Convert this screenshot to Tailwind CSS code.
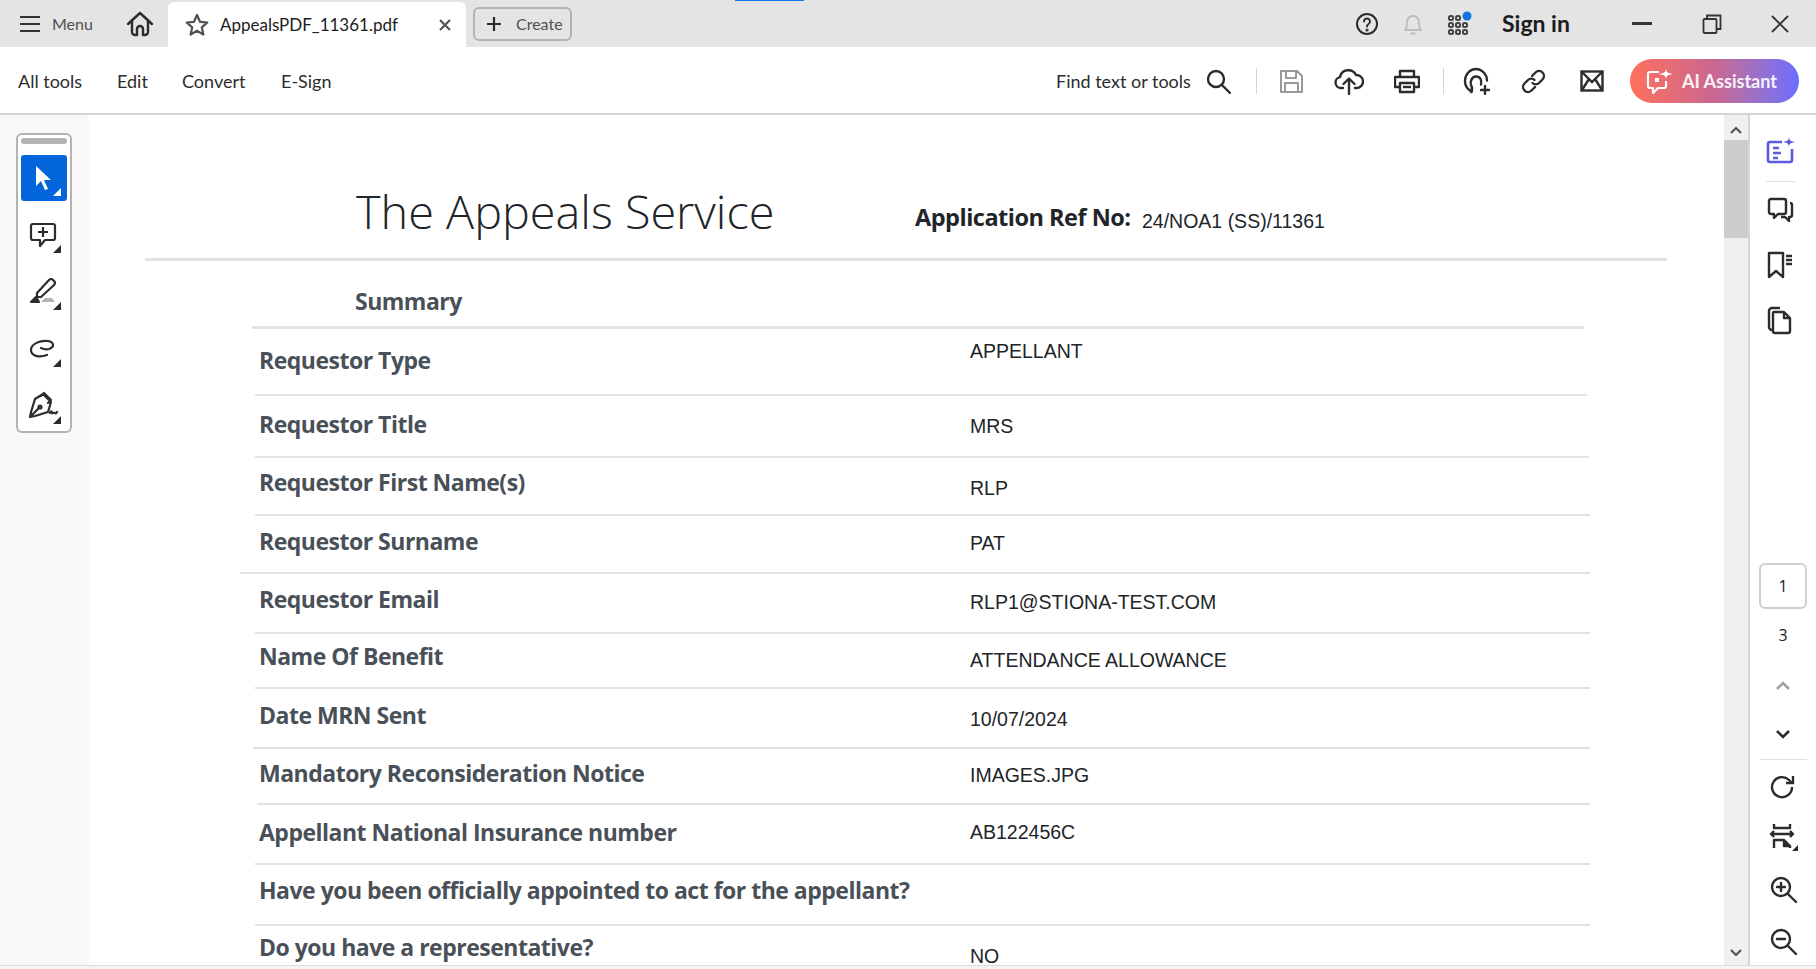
<!DOCTYPE html>
<html lang="en">
<head>
    <meta charset="UTF-8">
    <title>AppealsPDF_11361.pdf</title>
    <script src="https://cdn.jsdelivr.net/npm/@tailwindcss/browser@4"></script>
</head>
<body class="bg-white overflow-hidden">
<div class="relative h-[969px] w-[1816px] flex flex-col overflow-hidden font-['Lato',sans-serif] text-[#2c2c2c]">
    <!-- window title strip -->
    <div class="absolute left-[735px] top-0 w-[69px] h-[1px] bg-[#1473e6]"></div>
    <header class="h-[47px] shrink-0 bg-[#e4e4e4] flex items-center">
        <svg class="ml-[20px] w-[20px] h-[18px]" viewBox="0 0 20 18" fill="none" stroke="#333" stroke-width="2.200"><path d="M0 2h20M0 9h20M0 16h20"/></svg>
        <span class="ml-[12px] w-[42px] text-[16px] text-[#505050]">Menu</span>
        <svg class="ml-[32px] w-[28px] h-[26px]" viewBox="0 0 28 26" fill="none" stroke="#2c2c2c" stroke-width="2.400" stroke-linejoin="round" stroke-linecap="round"><path d="M2 13 14 2l12 11M6 10v11a3 3 0 0 0 3 3h2v-6a3 3 0 0 1 6 0v6h2a3 3 0 0 0 3-3V10"/></svg>
        <div class="ml-[14px] w-[298px] h-[45px] self-end bg-white rounded-t-md flex items-center">
            <svg class="ml-[17px] w-[24px] h-[24px]" viewBox="0 0 24 24" fill="none" stroke="#505050" stroke-width="2.200" stroke-linejoin="round"><path d="m12 2 3 6.800 7.300.7-5.500 4.900 1.600 7.200-6.400-3.800-6.400 3.800 1.600-7.200-5.500-4.900 7.300-.7z"/></svg>
            <span class="ml-[11px] w-[219px] text-[17px] text-[#1c1c1c]">AppealsPDF_11361.pdf</span>
            <svg class="w-[12px] h-[12px]" viewBox="0 0 12 12" fill="none" stroke="#555" stroke-width="2.200"><path d="m1 1 10 10M11 1 1 11"/></svg>
        </div>
        <div class="ml-[7px] w-[99px] h-[34px] border-2 border-[#b3b3b3] rounded-md flex items-center">
            <svg class="ml-[12px] w-[14px] h-[14px]" viewBox="0 0 14 14" fill="none" stroke="#2c2c2c" stroke-width="2.200"><path d="M7 0v14M0 7h14"/></svg>
            <span class="ml-[15px] text-[16px] text-[#505050]">Create</span>
        </div>
        <svg class="ml-[783px] w-[24px] h-[24px]" viewBox="0 0 24 24" fill="none" stroke="#2c2c2c" stroke-width="2"><circle cx="12" cy="12" r="10"/><path d="M9 9.500a3 3 0 1 1 4.600 2.500c-1 .7-1.600 1.200-1.600 2.500" stroke-linecap="round"/><circle cx="12" cy="18" r=".6"/></svg>
        <svg class="ml-[22px] w-[24px] h-[26px]" viewBox="0 0 24 26" fill="none" stroke="#bdbdbd" stroke-width="2" stroke-linejoin="round"><path d="M4 19c2-2 2-4 2-8a6 6 0 0 1 12 0c0 4 0 6 2 8zM9.500 22.500h5"/></svg>
        <svg class="ml-[22px] w-[26px] h-[26px]" viewBox="0 0 26 26" fill="none" stroke="#444" stroke-width="2"><rect x="2" y="5" width="4" height="4" rx="1.500"/><rect x="9" y="5" width="4" height="4" rx="1.500"/><rect x="2" y="12" width="4" height="4" rx="1.500"/><rect x="9" y="12" width="4" height="4" rx="1.500"/><rect x="16" y="12" width="4" height="4" rx="1.500"/><rect x="2" y="19" width="4" height="4" rx="1.500"/><rect x="9" y="19" width="4" height="4" rx="1.500"/><rect x="16" y="19" width="4" height="4" rx="1.500"/><circle cx="20" cy="5" r="4.500" fill="#1473e6" stroke="none"/></svg>
        <span class="ml-[29px] w-[80px] text-[23px] font-bold text-[#1c1c1c]">Sign in</span>
        <div class="ml-[50px] w-[20px] h-[2.500px] bg-[#333]"></div>
        <svg class="ml-[50px] w-[20px] h-[20px]" viewBox="0 0 20 20" fill="none" stroke="#333" stroke-width="1.800"><rect x="1.500" y="5" width="13" height="14" rx="1"/><path d="M5 5V1.500h13.500V15H14.500"/></svg>
        <svg class="ml-[49px] w-[18px] h-[18px]" viewBox="0 0 18 18" fill="none" stroke="#333" stroke-width="1.800"><path d="m1 1 16 16M17 1 1 17"/></svg>
    </header>

    <nav class="h-[68px] shrink-0 bg-white border-b-2 border-[#d5d5d5] pt-[2px] flex items-center text-[18px] relative">
        <span class="ml-[18px] w-[99px]">All tools</span>
        <span class="w-[65px]">Edit</span>
        <span class="w-[99px]">Convert</span>
        <span class="w-[775px]">E-Sign</span>
        <span class="w-[150px]">Find text or tools</span>
        <svg class="w-[25px] h-[25px]" viewBox="0 0 25 25" fill="none" stroke="#2c2c2c" stroke-width="2.400" stroke-linecap="round"><circle cx="10" cy="10" r="8"/><path d="m16 16 8 8"/></svg>
        <div class="ml-[25px] w-[1px] h-[26px] bg-[#d5d5d5]"></div>
        <svg class="ml-[22px] w-[25px] h-[25px]" viewBox="0 0 25 25" fill="none" stroke="#9a9a9a" stroke-width="2" stroke-linejoin="round"><path d="M2 2h16l5 5v16H2zM7 2v7h10V2M6 23v-9h13v9"/></svg>
        <svg class="ml-[30px] w-[30px] h-[28px]" viewBox="0 0 30 28" fill="none" stroke="#2c2c2c" stroke-width="2.400" stroke-linejoin="round" stroke-linecap="round"><path d="M9 21H7a5.500 5.500 0 0 1-1-10.900A8.500 8.500 0 0 1 22 8a6.500 6.500 0 0 1 1 13h-2M15 27V12M9.500 17 15 11.500l5.500 5.500"/></svg>
        <svg class="ml-[30px] w-[26px] h-[25px]" viewBox="0 0 26 25" fill="none" stroke="#2c2c2c" stroke-width="2.400" stroke-linejoin="round"><path d="M6 8V2h14v6M6 18H1V8h24v10h-5M6 14h14v9H6z"/><path d="M9 18h8"/></svg>
        <div class="ml-[23px] w-[1px] h-[26px] bg-[#d5d5d5]"></div>
        <svg class="ml-[19px] w-[28px] h-[28px]" viewBox="0 0 28 28" fill="none" stroke="#2c2c2c" stroke-width="2.400" stroke-linecap="round" stroke-linejoin="round"><path d="M9 24.500C4.500 22.500 2 18.500 2 14 2 7.500 7 2 13 2s11 5.500 11 11.500"/><path d="M8 25c1.500-2.500 1.500-4.500 0-7-1-3 .5-8.500 5-8.500s6 4 5 8"/><path d="M22 19v8M18 23h8"/></svg>
        <svg class="ml-[30px] w-[25px] h-[25px]" viewBox="0 0 25 25" fill="none" stroke="#2c2c2c" stroke-width="2.400" stroke-linecap="round"><path d="m11 7 3.500-3.500a4.500 4.500 0 0 1 7 7L18 14a4.500 4.500 0 0 1-6.500 0"/><path d="m14 18-3.500 3.500a4.500 4.500 0 0 1-7-7L7 11a4.500 4.500 0 0 1 6.500 0"/></svg>
        <svg class="ml-[34px] w-[24px] h-[22px]" viewBox="0 0 24 22" fill="none" stroke="#2c2c2c" stroke-width="2.400"><rect x="1.500" y="1.500" width="21" height="19"/><path d="m2 2 10 10L22 2M2 20l7-11M22 20l-7-11"/></svg>
        <div class="ml-[26px] w-[169px] h-[44px] rounded-full bg-gradient-to-r from-[#ff6f5a] via-[#c9678f] to-[#6a6cff] flex items-center">
            <svg class="ml-[15px] w-[28px] h-[28px]" viewBox="0 0 28 28" fill="none" stroke="#fff" stroke-width="2.200" stroke-linejoin="round"><path d="M14 5H5a2 2 0 0 0-2 2v12a2 2 0 0 0 2 2h3v5l5-5h6a2 2 0 0 0 2-2v-5"/><rect x="10" y="11" width="4" height="4" fill="#fff" stroke="none"/><path d="M21 0c0 5 1 6 7 7-6 1-7 2-7 7 0-5-1-6-7-7 6-1 7-2 7-7z" fill="#fff" stroke="none"/></svg>
            <span class="ml-[9px] text-[18px] font-bold text-white/90">AI Assistant</span>
        </div>
    </nav>

    <div class="flex-1 min-h-0 flex">
        <!-- left tools -->
        <aside class="w-[89px] shrink-0 bg-[#f8f8f8] pl-[16px] pt-[18px]">
            <div class="w-[56px] h-[300px] bg-white border-2 border-[#b3b3b3] rounded-md pt-[3px] pl-[3px] flex flex-col">
                <div class="w-[46px] h-[6px] rounded-full bg-[#b3b3b3]"></div>
                <div class="mt-[11px] w-[46px] h-[46px] rounded-[3px] bg-[#0265dc] flex items-center justify-center">
                    <svg class="w-[46px] h-[46px]" viewBox="1 1 46 46" fill="#fff"><path d="M16 12v20l5-5 4 9 3-1-4-9h7z"/><path d="M41 34v8h-8z"/></svg>
                </div>
                <div class="mt-[11px] w-[46px] h-[46px]">
                    <svg class="w-[46px] h-[46px]" viewBox="1 0 46 46" fill="none" stroke="#2c2c2c" stroke-width="2.200" stroke-linejoin="round"><path d="M13 12h20a2 2 0 0 1 2 2v12a2 2 0 0 1-2 2H25l-5 6v-6h-7a2 2 0 0 1-2-2V14a2 2 0 0 1 2-2z"/><path d="M23 15v10M18 20h10"/><path d="M41 33v8h-8z" fill="#2c2c2c" stroke="none"/></svg>
                </div>
                <div class="mt-[11px] w-[46px] h-[46px]">
                    <svg class="w-[46px] h-[46px]" viewBox="1 1 46 46" fill="none" stroke="#2c2c2c" stroke-width="2.200" stroke-linejoin="round"><path d="M17 25 29 12a2.500 2.500 0 0 1 4 0l1 1a2.500 2.500 0 0 1 0 4L21 29h-4z"/><path d="m11 34 5-5 3 5z" fill="#2c2c2c"/><path d="M21 34h14l-3-4H25z" fill="#b3b3b3" stroke="none"/><path d="M41 34v8h-8z" fill="#2c2c2c" stroke="none"/></svg>
                </div>
                <div class="mt-[11px] w-[46px] h-[46px]">
                    <svg class="w-[46px] h-[46px]" viewBox="1 0 46 46" fill="none" stroke="#2c2c2c" stroke-width="2.200" stroke-linecap="round"><path d="M27 29c-8 3-16 1-16-5s9-10 17-9c6 1 7 6 1 8-4 1-6 0-8-1"/><path d="M41 33v8h-8z" fill="#2c2c2c" stroke="none"/></svg>
                </div>
                <div class="mt-[11px] w-[46px] h-[46px]">
                    <svg class="w-[46px] h-[46px]" viewBox="1 0 46 46" fill="none" stroke="#2c2c2c" stroke-width="2.200" stroke-linejoin="round" stroke-linecap="round"><path d="m23 11 8 8-3 10-13 4-5 1 1-5 4-13zM21 13l3-3 7 7-3 3M11 33l8-8"/><circle cx="20" cy="24" r="1.500"/><path d="M30 30c1-3 2-1 2 0s2-1 3 0 1 0 2-1"/><path d="M41 33v8h-8z" fill="#2c2c2c" stroke="none"/></svg>
                </div>
            </div>
        </aside>

        <!-- document page -->
        <main class="w-[1635px] shrink-0 overflow-hidden bg-white">
            <div class="h-[143px] flex">
                <h1 class="ml-[267px] w-[559px] mt-[64px] h-[64px] text-[46.800px] leading-[64px] font-light font-['Open_Sans',sans-serif] text-[#212529]">The Appeals Service</h1>
                <span class="mt-[86px] w-[227px] h-[32px] text-[23.500px] tracking-[-0.5px] leading-[32px] font-bold font-['Open_Sans',sans-serif] text-[#212529]">Application Ref No:</span>
                <span class="mt-[94px] h-[24px] text-[19.500px] leading-[24px] font-['Liberation_Sans',sans-serif] text-[#212529]">24/NOA1 (SS)/11361</span>
            </div>
            <div class="ml-[56px] w-[1522px] h-[3px] bg-[#dfe2e6]"></div>
            <div class="h-[65px]">
                <div class="ml-[266px] pt-[24px] text-[23px] tracking-[-0.5px] leading-[32px] font-bold font-['Open_Sans',sans-serif] text-[#495057]">Summary</div>
            </div>
            <div class="ml-[163px] w-[1332px] h-[3px] bg-[#dfe2e6]"></div>

            <div class="font-['Open_Sans',sans-serif]">
                <div class="ml-[166px] w-[1332px] h-[67px] border-b-2 border-[#dfe2e6] flex pl-[4px]">
                    <div class="w-[711px] shrink-0 mt-[15px] h-[32px] text-[23px] tracking-[-0.5px] leading-[32px] font-bold text-[#495057]">Requestor Type</div>
                    <div class="mt-[10px] h-[24px] text-[19.500px] leading-[24px] font-['Liberation_Sans',sans-serif] text-[#212529]">APPELLANT</div>
                </div>
                <div class="ml-[166px] w-[1334px] h-[62px] border-b-2 border-[#dfe2e6] flex pl-[4px]">
                    <div class="w-[711px] shrink-0 mt-[12px] h-[32px] text-[23px] tracking-[-0.5px] leading-[32px] font-bold text-[#495057]">Requestor Title</div>
                    <div class="mt-[18px] h-[24px] text-[19.500px] leading-[24px] font-['Liberation_Sans',sans-serif] text-[#212529]">MRS</div>
                </div>
                <div class="ml-[166px] w-[1335px] h-[58px] border-b-2 border-[#dfe2e6] flex pl-[4px]">
                    <div class="w-[711px] shrink-0 mt-[8px] h-[32px] text-[23px] tracking-[-0.5px] leading-[32px] font-bold text-[#495057]">Requestor First Name(s)</div>
                    <div class="mt-[18px] h-[24px] text-[19.500px] leading-[24px] font-['Liberation_Sans',sans-serif] text-[#212529]">RLP</div>
                </div>
                <div class="ml-[151px] w-[1350px] h-[58px] border-b-2 border-[#dfe2e6] flex pl-[19px]">
                    <div class="w-[711px] shrink-0 mt-[9px] h-[32px] text-[23px] tracking-[-0.5px] leading-[32px] font-bold text-[#495057]">Requestor Surname</div>
                    <div class="mt-[15px] h-[24px] text-[19.500px] leading-[24px] font-['Liberation_Sans',sans-serif] text-[#212529]">PAT</div>
                </div>
                <div class="ml-[166px] w-[1335px] h-[60px] border-b-2 border-[#dfe2e6] flex pl-[4px]">
                    <div class="w-[711px] shrink-0 mt-[9px] h-[32px] text-[23px] tracking-[-0.5px] leading-[32px] font-bold text-[#495057]">Requestor Email</div>
                    <div class="mt-[16px] h-[24px] text-[19.500px] leading-[24px] font-['Liberation_Sans',sans-serif] text-[#212529]">RLP1@STIONA-TEST.COM</div>
                </div>
                <div class="ml-[166px] w-[1335px] h-[55px] border-b-2 border-[#dfe2e6] flex pl-[4px]">
                    <div class="w-[711px] shrink-0 mt-[6px] h-[32px] text-[23px] tracking-[-0.5px] leading-[32px] font-bold text-[#495057]">Name Of Benefit</div>
                    <div class="mt-[14px] h-[24px] text-[19.500px] leading-[24px] font-['Liberation_Sans',sans-serif] text-[#212529]">ATTENDANCE ALLOWANCE</div>
                </div>
                <div class="ml-[164px] w-[1337px] h-[60px] border-b-2 border-[#dfe2e6] flex pl-[6px]">
                    <div class="w-[711px] shrink-0 mt-[10px] h-[32px] text-[23px] tracking-[-0.5px] leading-[32px] font-bold text-[#495057]">Date MRN Sent</div>
                    <div class="mt-[18px] h-[24px] text-[19.500px] leading-[24px] font-['Liberation_Sans',sans-serif] text-[#212529]">10/07/2024</div>
                </div>
                <div class="ml-[168px] w-[1333px] h-[56px] border-b-2 border-[#dfe2e6] flex pl-[2px]">
                    <div class="w-[711px] shrink-0 mt-[8px] h-[32px] text-[23px] tracking-[-0.5px] leading-[32px] font-bold text-[#495057]">Mandatory Reconsideration Notice</div>
                    <div class="mt-[14px] h-[24px] text-[19.500px] leading-[24px] font-['Liberation_Sans',sans-serif] text-[#212529]">IMAGES.JPG</div>
                </div>
                <div class="ml-[166px] w-[1335px] h-[60px] border-b-2 border-[#dfe2e6] flex pl-[4px]">
                    <div class="w-[711px] shrink-0 mt-[11px] h-[32px] text-[23px] tracking-[-0.5px] leading-[32px] font-bold text-[#495057]">Appellant National Insurance number</div>
                    <div class="mt-[15px] h-[24px] text-[19.500px] leading-[24px] font-['Liberation_Sans',sans-serif] text-[#212529]">AB122456C</div>
                </div>
                <div class="ml-[166px] w-[1335px] h-[61px] border-b-2 border-[#dfe2e6] flex pl-[4px]">
                    <div class="w-[711px] shrink-0 mt-[9px] h-[32px] text-[23px] tracking-[-0.5px] leading-[32px] font-bold text-[#495057]">Have you been officially appointed to act for the appellant?</div>
                </div>
                <div class="ml-[166px] w-[1335px] flex pl-[4px]">
                    <div class="w-[711px] shrink-0 mt-[6px] h-[31px] text-[23px] tracking-[-0.5px] leading-[31px] font-bold text-[#495057]">Do you have a representative?</div>
                    <div class="mt-[21px] h-[18px] text-[19.500px] leading-[18px] font-['Liberation_Sans',sans-serif] text-[#212529]">NO</div>
                </div>
            </div>
        </main>

        <!-- scrollbar -->
        <div class="w-[24px] shrink-0 bg-[#f0f0f0] flex flex-col items-center relative">
            <svg class="mt-[11px] w-[12px] h-[8px]" viewBox="0 0 12 8" fill="none" stroke="#555" stroke-width="2.200"><path d="m1 7 5-5 5 5"/></svg>
            <div class="mt-[6px] w-full h-[98px] bg-[#cdcdcd]"></div>
            <svg class="mt-auto mb-[8px] w-[12px] h-[8px]" viewBox="0 0 12 8" fill="none" stroke="#555" stroke-width="2.200"><path d="m1 1 5 5 5-5"/></svg>
        </div>
        <div class="w-[2px] shrink-0 bg-[#d5d5d5]"></div>

        <!-- right rail -->
        <aside class="flex-1 min-w-0 flex flex-col items-center pr-[6px] text-[#1c1c1c]">
            <svg class="mt-[21px] w-[30px] h-[30px]" viewBox="0 0 30 30" fill="none" stroke="#5c5ce0" stroke-width="2.600" stroke-linejoin="round"><path d="M17 6H5a2 2 0 0 0-2 2v16a2 2 0 0 0 2 2h20a2 2 0 0 0 2-2V13"/><path d="M8 12h6M8 17h8M8 22h5"/><path d="M24 0c0 4 1 5 6 6-5 1-6 2-6 6 0-4-1-5-6-6 5-1 6-2 6-6z" fill="#5c5ce0" stroke="none"/></svg>
            <div class="mt-[15px] w-[29px] h-[1px] bg-[#e0e0e0]"></div>
            <svg class="mt-[13px] w-[30px] h-[30px]" viewBox="0 0 30 30" fill="none" stroke="#2c2c2c" stroke-width="2.400" stroke-linejoin="round"><path d="M6 4h13a2 2 0 0 1 2 2v11a2 2 0 0 1-2 2h-6l-4 4v-4H6a2 2 0 0 1-2-2V6a2 2 0 0 1 2-2z"/><path d="M25 8a2 2 0 0 1 2 2v10a2 2 0 0 1-2 2h-1v4l-4-4h-4"/></svg>
            <svg class="mt-[25px] w-[30px] h-[30px]" viewBox="0 0 30 30" fill="none" stroke="#2c2c2c" stroke-width="2.400" stroke-linejoin="round"><path d="M4 3h14v24l-7-6-7 6z"/><path d="M21 6h6M21 10h6M21 14h6"/></svg>
            <svg class="mt-[25px] w-[30px] h-[30px]" viewBox="0 0 30 30" fill="none" stroke="#2c2c2c" stroke-width="2.400" stroke-linejoin="round"><path d="M8 25H7a3 3 0 0 1-3-3V6a3 3 0 0 1 3-3h8"/><path d="M8 8a1 1 0 0 1 1-1h10l6 6v13a2 2 0 0 1-2 2H10a2 2 0 0 1-2-2zM19 7v6h6"/></svg>
            <div class="mt-[228px] ml-[6px] w-[48px] h-[46px] border-2 border-[#cfcfcf] rounded-md flex items-center justify-center text-[16px] font-['Open_Sans',sans-serif]">1</div>
            <div class="mt-[14px] ml-[6px] h-[24px] text-[16px] leading-[24px] font-['Open_Sans',sans-serif]">3</div>
            <svg class="mt-[34px] ml-[6px] w-[14px] h-[10px]" viewBox="0 0 14 10" fill="none" stroke="#a0a0a0" stroke-width="2.600"><path d="m1 8 6-6 6 6"/></svg>
            <svg class="mt-[38px] ml-[6px] w-[14px] h-[10px]" viewBox="0 0 14 10" fill="none" stroke="#2c2c2c" stroke-width="2.600"><path d="m1 2 6 6 6-6"/></svg>
            <div class="mt-[20px] ml-[6px] w-[47px] h-[1px] bg-[#e0e0e0]"></div>
            <svg class="mt-[12px] ml-[6px] w-[30px] h-[30px]" viewBox="0 0 30 30" fill="none" stroke="#2c2c2c" stroke-width="2.400" stroke-linejoin="round"><path d="M24 15a10 10 0 1 1-3-7l3 3"/><path d="M25 4v7h-7"/></svg>
            <svg class="mt-[20px] ml-[6px] w-[30px] h-[30px]" viewBox="0 0 30 30" fill="none" stroke="#2c2c2c" stroke-width="2.400" stroke-linejoin="round"><path d="M6 2v4h16V2M3 12h22M6 9l-3 3 3 3M22 9l3 3-3 3M6 26V18h10l6 6v2"/><path d="M16 18v6h6" fill="#2c2c2c"/><path d="M30 23v6h-6z" fill="#2c2c2c" stroke="none"/></svg>
            <svg class="mt-[22px] ml-[6px] w-[30px] h-[30px]" viewBox="0 0 30 30" fill="none" stroke="#2c2c2c" stroke-width="2.400" stroke-linecap="round"><circle cx="13" cy="13" r="9"/><path d="m20 20 8 8M9 13h8M13 9v8"/></svg>
            <svg class="mt-[22px] ml-[6px] w-[30px] h-[30px]" viewBox="0 0 30 30" fill="none" stroke="#2c2c2c" stroke-width="2.400" stroke-linecap="round"><circle cx="13" cy="13" r="9"/><path d="m20 20 8 8M9 13h8"/></svg>
        </aside>
    </div>
    <div class="h-[4px] shrink-0 bg-[#f5f5f5] border-t border-[#dcdcdc]"></div>
</div>
</body>
</html>
